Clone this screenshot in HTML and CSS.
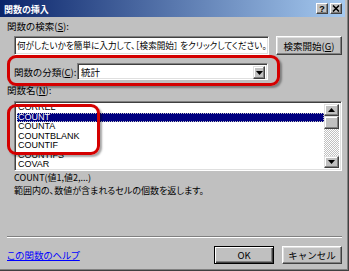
FILE: index.html
```html
<!DOCTYPE html>
<html lang="ja">
<head>
    <meta charset="UTF-8">
    <title>関数の挿入</title>
    <link rel="stylesheet" href="styles.css">
</head>
<body>
    <div class="dialog">
        <div class="titlebar">
            <span class="title">関数の挿入</span>
            <div class="caption-btns">
                <span class="cap-btn">?</span>
                <span class="cap-btn">
                    <svg width="8" height="7" viewBox="0 0 8 7"><path d="M1 0.5 L7 6.5 M7 0.5 L1 6.5" stroke="#000" stroke-width="1.6"/></svg>
                </span>
            </div>
        </div>
        <div class="body">
            <div class="search-label">関数の検索(<u>S</u>):</div>
            <div class="search-row">
                <div class="textbox">何がしたいかを簡単に入力して、［検索開始］ をクリックしてください。</div>
                <button class="btn search-btn">検索開始(<u>G</u>)</button>
            </div>
            <div class="category-row">
                <span class="cat-label">関数の分類(<u>C</u>):</span>
                <div class="select">
                    <span class="select-value">統計</span>
                    <span class="drop-btn">
                        <svg width="7" height="4" viewBox="0 0 7 4"><path d="M0 0 H7 L3.5 4 Z" fill="#000"/></svg>
                    </span>
                </div>
            </div>
            <div class="list-label">関数名(<u>N</u>):</div>
            <div class="listbox">
                <ul class="items">
                    <li>CORREL</li>
                    <li class="selected">COUNT</li>
                    <li>COUNTA</li>
                    <li>COUNTBLANK</li>
                    <li>COUNTIF</li>
                    <li>COUNTIFS</li>
                    <li>COVAR</li>
                </ul>
                <div class="scrollbar">
                    <span class="scroll-btn">
                        <svg width="7" height="4" viewBox="0 0 7 4"><path d="M0 4 H7 L3.5 0 Z" fill="#000"/></svg>
                    </span>
                    <span class="scroll-thumb"></span>
                    <span class="scroll-track"></span>
                    <span class="scroll-btn">
                        <svg width="7" height="4" viewBox="0 0 7 4"><path d="M0 0 H7 L3.5 4 Z" fill="#000"/></svg>
                    </span>
                </div>
            </div>
            <div class="desc">
                <div class="syntax">COUNT(値1,値2,...)</div>
                <div>範囲内の、数値が含まれるセルの個数を返します。</div>
            </div>
            <div class="separator"></div>
            <div class="footer">
                <a class="help-link" href="#">この関数のヘルプ</a>
                <div class="buttons">
                    <button class="btn default-btn">OK</button>
                    <button class="btn">キャンセル</button>
                </div>
            </div>
        </div>
        <div class="mark mark-category"></div>
        <div class="mark mark-names"></div>
    </div>
</body>
</html>
```

FILE: styles.css
```css
* {
    margin: 0;
    padding: 0;
    box-sizing: border-box;
}
body {
    font-family: "Noto Sans CJK JP", sans-serif;
    font-size: 9.5px;
    font-feature-settings: "palt";
    background-color: #c0c0c0;
    color: #000;
}
.dialog {
    position: relative;
    width: 349px;
    height: 271px;
    display: flex;
    flex-direction: column;
    padding: 0 3px 3px 0;
    background-color: #c0c0c0;
    border-right: 1px solid #404040;
    border-bottom: 1px solid #404040;
    box-shadow: inset -1px -1px #808080;
}
.titlebar {
    height: 17px;
    display: flex;
    align-items: center;
    justify-content: space-between;
    padding: 0 3px 0 4px;
    background: linear-gradient(to right, #0a246a, #a6caf0);
    color: #fff;
}
.title {
    font-size: 9px;
    font-weight: bold;
    line-height: 17px;
    padding-top: 1px;
}
.caption-btns {
    display: flex;
    gap: 2px;
}
.cap-btn {
    width: 12px;
    height: 11px;
    display: flex;
    align-items: center;
    justify-content: center;
    background-color: #c0c0c0;
    color: #000;
    font-family: "Liberation Sans", sans-serif;
    font-weight: bold;
    font-size: 9px;
    border: 1px solid;
    border-color: #fff #404040 #404040 #fff;
    box-shadow: inset -1px -1px #808080;
}

/* raised / sunken */
.btn {
    background-color: #c0c0c0;
    font-family: inherit;
    font-size: 9.5px;
    color: #000;
    border: 1px solid;
    border-color: #fff #404040 #404040 #fff;
    box-shadow: inset -1px -1px #808080, inset 1px 1px #dfdfdf;
}
.default-btn {
    border: 1px solid #000;
    box-shadow: inset 1px 1px #fff, inset -1px -1px #404040, inset -2px -2px #808080;
}
.textbox,
.select,
.listbox {
    background-color: #fff;
    border: 1px solid;
    border-color: #808080 #fff #fff #808080;
    box-shadow: inset 1px 1px #404040, inset -1px -1px #dfdfdf;
}

.body {
    flex: 1;
    display: flex;
    flex-direction: column;
    padding: 0 3px 0 7px;
}
.search-label {
    margin-top: 3px;
    line-height: 12px;
}
.search-row {
    display: flex;
    margin-top: 4px;
    height: 19px;
    padding-left: 7px;
}
.textbox {
    width: 255px;
    padding-left: 2px;
    line-height: 16px;
    font-size: 8.6px;
    white-space: nowrap;
    overflow: hidden;
}
.search-btn {
    margin-left: auto;
    width: 66px;
}
.category-row {
    display: flex;
    align-items: center;
    margin-top: 8px;
    height: 17px;
    padding-left: 7px;
}
.cat-label {
    width: 63px;
}
.select {
    width: 191px;
    height: 17px;
    display: flex;
    padding: 2px;
}
.select-value {
    flex: 1;
    line-height: 13px;
    padding-left: 1px;
}
.drop-btn,
.scroll-btn {
    width: 12px;
    height: 13px;
    display: flex;
    align-items: center;
    justify-content: center;
    background-color: #c0c0c0;
    border: 1px solid;
    border-color: #dfdfdf #404040 #404040 #dfdfdf;
    box-shadow: inset -1px -1px #808080, inset 1px 1px #fff;
}
.list-label {
    margin-top: 5px;
    line-height: 11px;
}
.listbox {
    margin: 5px 0 0 7px;
    height: 70px;
    display: flex;
    padding: 2px;
    overflow: hidden;
}
.items {
    flex: 1;
    list-style: none;
    margin-top: -1px;
    font-family: "Liberation Sans", sans-serif;
    font-size: 9px;
    line-height: 9.5px;
    overflow: hidden;
}
.items li {
    padding-left: 1px;
}
.items .selected {
    background-color: #000080;
    color: #fff;
    outline: 1px dotted #c0c0c0;
    outline-offset: -1px;
}
.scrollbar {
    width: 15px;
    display: flex;
    flex-direction: column;
}
.scroll-btn {
    width: 15px;
    height: 12px;
}
.scroll-thumb {
    height: 13px;
    background-color: #c0c0c0;
    border: 1px solid;
    border-color: #dfdfdf #404040 #404040 #dfdfdf;
    box-shadow: inset -1px -1px #808080, inset 1px 1px #fff;
}
.scroll-track {
    flex: 1;
    background-color: #e0e0e0;
    background-image: repeating-conic-gradient(#fff 0 25%, #c0c0c0 0 50%);
    background-size: 2px 2px;
}
.desc {
    line-height: 13px;
    padding-left: 7px;
    font-size: 9px;
}
.separator {
    margin-top: 39px;
    height: 2px;
    border-top: 1px solid #808080;
    border-bottom: 1px solid #fff;
}
.footer {
    margin-top: 8px;
    height: 18px;
    display: flex;
    align-items: center;
}
.help-link {
    color: #0000ff;
    text-decoration: underline;
}
.buttons {
    margin-left: auto;
    display: flex;
    gap: 8px;
}
.buttons .btn {
    width: 60px;
    height: 18px;
}

/* red highlight frames drawn over the dialog */
.mark {
    position: absolute;
    border: 3px solid #d40000;
    border-radius: 9px;
    box-shadow: 2px 2px 2px rgba(0, 0, 0, 0.35);
}
.mark-category {
    left: 7px;
    top: 55px;
    width: 273px;
    height: 31px;
}
.mark-names {
    left: 7px;
    top: 104px;
    width: 93px;
    height: 51px;
}
```
